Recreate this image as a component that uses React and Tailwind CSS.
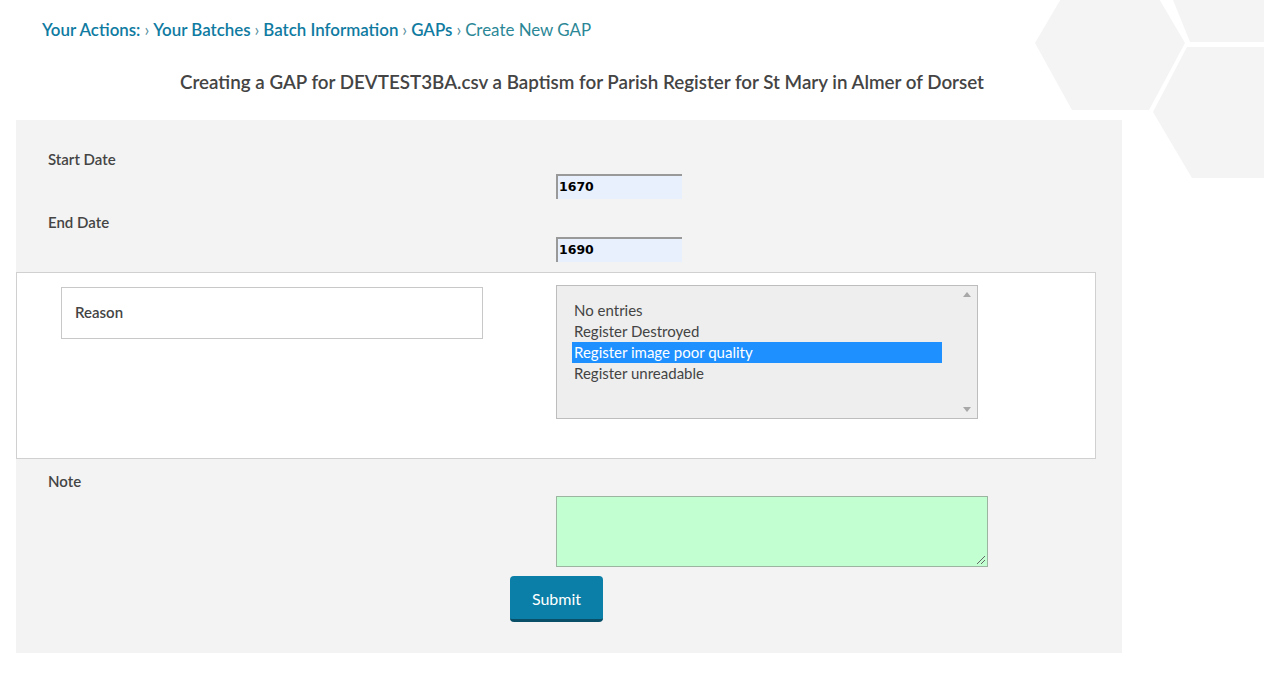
import React from 'react';

const options = ['No entries', 'Register Destroyed', 'Register image poor quality', 'Register unreadable'];

function Hexagons() {
  return (
    <svg className="absolute top-0 right-0" width="240" height="190" viewBox="0 0 240 190">
      <polygon points="11,43 48,-20 124,-20 161,43 125,110 48,110" fill="#f4f4f4" />
      <polygon points="141,-20 166,42 240,42 240,-20" fill="#f4f4f4" />
      <polygon points="129,112 163,47 240,47 240,178 168,178" fill="#f4f4f4" />
    </svg>
  );
}

export default function App() {
  return (
    <div className="relative w-[1264px] h-[674px] bg-white overflow-hidden" style={{ fontFamily: 'Lato, "Open Sans", sans-serif' }}>
      <Hexagons />

      <div className="relative pl-[42px] pt-[18px] text-[16.9px] leading-[24px] text-[#0f7ba1]">
        <span className="font-semibold">Your Actions:</span>
        <span className="text-[#5a8fa0] mx-[4px]">›</span>
        <span className="font-semibold">Your Batches</span>
        <span className="text-[#5a8fa0] mx-[4px]">›</span>
        <span className="font-semibold">Batch Information</span>
        <span className="text-[#5a8fa0] mx-[4px]">›</span>
        <span className="font-semibold">GAPs</span>
        <span className="text-[#5a8fa0] mx-[4px]">›</span>
        <span className="text-[#2b8796]">Create New GAP</span>
      </div>

      <div className="relative ml-[16px] w-[1132px]">
        <h2 className="mt-[27px] text-center text-[18.8px] leading-[26px] font-semibold text-[#444]">
          Creating a GAP for DEVTEST3BA.csv a Baptism for Parish Register for St Mary in Almer of Dorset
        </h2>

        <div className="mt-[25px] w-[1106px] h-[533px] bg-[#f3f3f3] pt-[30px]">
          <div className="pl-[32px] text-[15px] leading-[18px] font-semibold text-[#444]">Start Date</div>
          <div className="pl-[540px] mt-[6px]">
            <div className="w-[126px] h-[25px] bg-[#e8f0fe] border-t-2 border-l-2 border-[#999] pl-[1px] text-[12.5px] font-bold leading-[21px] text-black" style={{ fontFamily: '"DejaVu Sans", sans-serif' }}>1670</div>
          </div>

          <div className="pl-[32px] mt-[14px] text-[15px] leading-[18px] font-semibold text-[#444]">End Date</div>
          <div className="pl-[540px] mt-[6px]">
            <div className="w-[126px] h-[25px] bg-[#e8f0fe] border-t-2 border-l-2 border-[#999] pl-[1px] text-[12.5px] font-bold leading-[21px] text-black" style={{ fontFamily: '"DejaVu Sans", sans-serif' }}>1690</div>
          </div>

          <div className="mt-[10px] w-[1080px] h-[187px] bg-white border border-[#d0d0d0] flex">
            <div className="ml-[44px] mt-[14px] w-[422px] h-[52px] border border-[#c8c8c8] flex items-center pl-[13px] pb-[2px] text-[15px] font-semibold text-[#444]">
              Reason
            </div>
            <div className="ml-[73px] mt-[12px] w-[422px] h-[134px] bg-[#eeeeee] border border-[#bdbdbd] flex">
              <div className="flex-1 pt-[14px] pl-[15px] pr-[14px] text-[15px] leading-[21px] text-[#444]">
                {options.map((o, i) => (
                  <div key={o} className={i === 2 ? 'bg-[#1e90ff] text-white pl-[2px]' : 'pl-[2px]'}>{o}</div>
                ))}
              </div>
              <div className="w-[21px] flex flex-col justify-between items-center py-[6px]">
                <div className="w-0 h-0 border-l-[4px] border-r-[4px] border-b-[5px] border-l-transparent border-r-transparent border-b-[#a8a8a8]" />
                <div className="w-0 h-0 border-l-[4px] border-r-[4px] border-t-[5px] border-l-transparent border-r-transparent border-t-[#a8a8a8]" />
              </div>
            </div>
          </div>

          <div className="pl-[32px] mt-[13px] text-[15px] leading-[18px] font-semibold text-[#444]">Note</div>
          <div className="pl-[540px] mt-[6px]">
            <div className="relative w-[432px] h-[71px] bg-[#c2ffd1] border border-[#9bb5a0]">
              <svg className="absolute right-[1px] bottom-[1px]" width="10" height="10" viewBox="0 0 10 10">
                <line x1="9" y1="1" x2="1" y2="9" stroke="#666" strokeWidth="1" />
                <line x1="9" y1="5" x2="5" y2="9" stroke="#666" strokeWidth="1" />
              </svg>
            </div>
          </div>
          <div className="pl-[494px] mt-[9px]">
            <button className="w-[93px] h-[46px] rounded-[4px] bg-[#0b7fa7] border-b-[3px] border-[#0a4f68] text-white text-[16px] leading-[20px] pt-[2px]">
              Submit
            </button>
          </div>
        </div>
      </div>
    </div>
  );
}
